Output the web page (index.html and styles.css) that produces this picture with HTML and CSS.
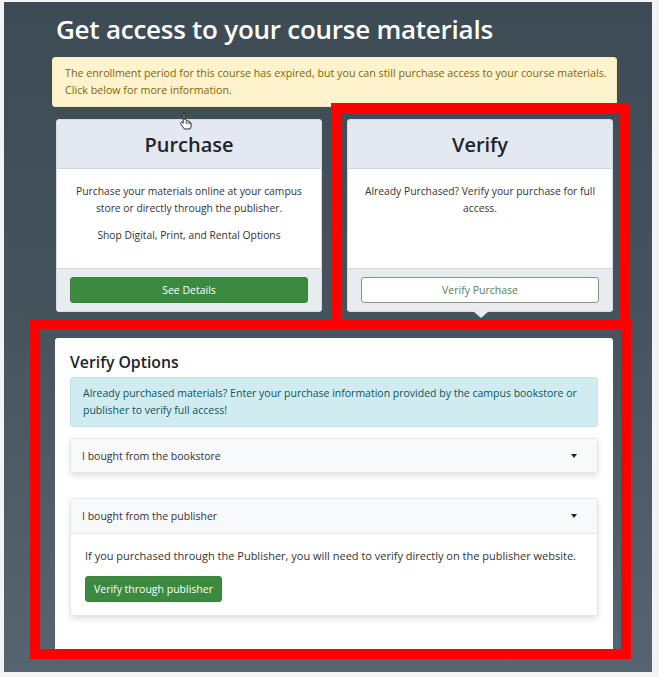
FILE: index.html
```html
<!DOCTYPE html>
<html lang="en">
<head>
<meta charset="utf-8">
<title>Get access to your course materials</title>
<link rel="stylesheet" href="styles.css">
</head>
<body>
<div class="screen">
  <div class="container">
    <h1 class="page-title">Get access to your course materials</h1>
    <div class="alert alert-warning">The enrollment period for this course has expired, but you can still purchase access to your course materials. Click below for more information.</div>
    <div class="cards">
      <div class="card">
        <div class="card-header"><h2 class="card-title">Purchase</h2></div>
        <div class="card-body">
          <p>Purchase your materials online at your campus store or directly through the publisher.</p>
          <p>Shop Digital, Print, and Rental Options</p>
        </div>
        <div class="card-footer"><button class="btn btn-success btn-block">See Details</button></div>
      </div>
      <div class="card card-active">
        <div class="card-header"><h2 class="card-title">Verify</h2></div>
        <div class="card-body">
          <p>Already Purchased? Verify your purchase for full access.</p>
        </div>
        <div class="card-footer"><button class="btn btn-outline btn-block">Verify Purchase</button></div>
        <span class="pointer"></span>
      </div>
    </div>
    <div class="options-card">
      <h3 class="options-title">Verify Options</h3>
      <div class="alert alert-info">Already purchased materials? Enter your purchase information provided by the campus bookstore or publisher to verify full access!</div>
      <div class="acc">
        <div class="acc-header"><span>I bought from the bookstore</span><span class="caret"></span></div>
      </div>
      <div class="acc acc-open">
        <div class="acc-header"><span>I bought from the publisher</span><span class="caret"></span></div>
        <div class="acc-body">
          <p>If you purchased through the Publisher, you will need to verify directly on the publisher website.</p>
          <button class="btn btn-success">Verify through publisher</button>
        </div>
      </div>
    </div>
  </div>
</div>
<div class="mark mark-verify"></div>
<div class="mark mark-options"></div>
<svg class="cursor" width="14" height="18" viewBox="0 0 14 18" aria-hidden="true">
  <path d="M4.5 1.2c.8 0 1.3.6 1.3 1.3v5.2l.3-.1c.7-.2 1.3.2 1.4.8l.1.3c.6-.4 1.4-.2 1.6.5.6-.3 1.4 0 1.5.7l.1.6c.5-.2 1.2.1 1.3.8.2 1.6.1 3.3-.4 4.7L11 17H5.4L2 12.4c-.6-.8-.6-1.6 0-2 .6-.4 1.3-.2 1.7.3l.5.6V2.5c0-.7.5-1.3 1.3-1.3z" fill="#fff" stroke="#111" stroke-width="0.9" stroke-linejoin="round"/>
  <path d="M7.2 9v3M9.1 9.5v2.7M11 10v2.3" stroke="#111" stroke-width="0.7" fill="none"/>
</svg>
</body>
</html>
```
FILE: styles.css
```css
* { box-sizing: border-box; }
html, body { margin: 0; padding: 0; }
body {
  background: #f2f3f4;
  font-family: "Open Sans", "Noto Sans", "DejaVu Sans", sans-serif;
  width: 659px;
  height: 677px;
  overflow: hidden;
  position: relative;
}
.screen {
  margin: 2px 0 0 4px;
  width: 648px;
  height: 670px;
  overflow: hidden;
  background: linear-gradient(180deg, #3d4b55 0%, #45535d 45%, #56656f 100%);
  padding: 10px 0 0 48px;
}
.container { width: 565px; }
.page-title {
  margin: 0 0 11px 4px;
  color: #fff;
  font-size: 26px;
  line-height: 34px;
  font-weight: 600;
  letter-spacing: -0.25px;
}
.alert {
  border: 1px solid transparent;
  border-radius: 3px;
  padding: 7px 12px;
  line-height: 17px;
}
.alert-warning {
  background: #fff3cd;
  border-color: #f7e9b8;
  color: #856404;
  font-size: 10.7px;
  padding-right: 6px;
}
.alert-info {
  background: #d1ecf1;
  border-color: #c3e4ea;
  color: #0c5460;
  font-size: 10.5px;
}
.cards {
  display: flex;
  gap: 25px;
  margin-top: 12px;
  padding: 0 4px;
}
.card {
  flex: 1;
  position: relative;
  background: #fff;
  border: 1px solid #d6dce4;
  border-radius: 3px;
  display: flex;
  flex-direction: column;
  height: 193px;
}
.card-header {
  background: #e4e9f1;
  border-bottom: 1px solid #cdd4dd;
  height: 49px;
  display: flex;
  align-items: center;
  justify-content: center;
  border-radius: 3px 3px 0 0;
}
.card-title {
  margin: 0;
  font-size: 20px;
  font-weight: 600;
  color: #212529;
}
.card-body {
  flex: 1;
  padding: 14px 14px 0;
  text-align: center;
  font-size: 10.3px;
  line-height: 17px;
  color: #333;
}
.card-body p { margin: 0 0 10px; }
.card-footer {
  background: #e8ecf1;
  border-top: 1px solid #d3d9e1;
  padding: 8px 13px 8px;
  border-radius: 0 0 3px 3px;
}
.btn {
  font-family: inherit;
  font-size: 10.5px;
  border-radius: 3px;
  height: 26px;
  padding: 0 10px;
  cursor: pointer;
}
.btn-block { display: block; width: 100%; }
.btn-success {
  background: #3b8a3f;
  border: 1px solid #37833b;
  color: #fff;
}
.btn-outline {
  background: #fff;
  border: 1px solid #7c9a7e;
  color: #5b7c5e;
}
.pointer {
  position: absolute;
  left: 125px;
  bottom: -7px;
  width: 0;
  height: 0;
  border-left: 8px solid transparent;
  border-right: 8px solid transparent;
  border-top: 7px solid #e8ecf1;
}
.options-card {
  margin: 26px 4px 0 3px;
  background: #fff;
  border-radius: 3px;
  padding: 14px 15px 0;
  height: 318px;
}
.options-title {
  margin: 0 0 5px;
  font-size: 15.8px;
  line-height: 20px;
  font-weight: 600;
  color: #212529;
}
.acc {
  margin-top: 11px;
  border: 1px solid #e3e5e8;
  border-radius: 3px;
  background: #fff;
  box-shadow: 0 3px 6px rgba(0, 0, 0, 0.12);
}
.acc + .acc { margin-top: 25px; }
.acc-header {
  background: #f8f9fa;
  height: 33px;
  display: flex;
  align-items: center;
  justify-content: space-between;
  padding: 0 20px 0 11px;
  font-size: 10.5px;
  color: #333;
}
.acc-open .acc-header { border-bottom: 1px solid #e6e8eb; height: 35px; }
.caret {
  width: 0;
  height: 0;
  border-left: 3.5px solid transparent;
  border-right: 3.5px solid transparent;
  border-top: 4px solid #222;
}
.acc-body {
  padding: 13px 14px 13px;
  font-size: 11px;
  line-height: 17px;
  color: #333;
}
.acc-body p { margin: 0 0 12px; }
.acc-body .btn { height: 26px; padding: 0 8px; font-size: 10.5px; }
.mark {
  position: absolute;
  border: 10px solid #ff0000;
}
.mark-verify {
  left: 331px;
  top: 103px;
  width: 299px;
  height: 226px;
}
.mark-options {
  left: 30px;
  top: 319px;
  width: 601px;
  height: 340px;
}
.cursor {
  position: absolute;
  left: 179px;
  top: 112px;
}
```
